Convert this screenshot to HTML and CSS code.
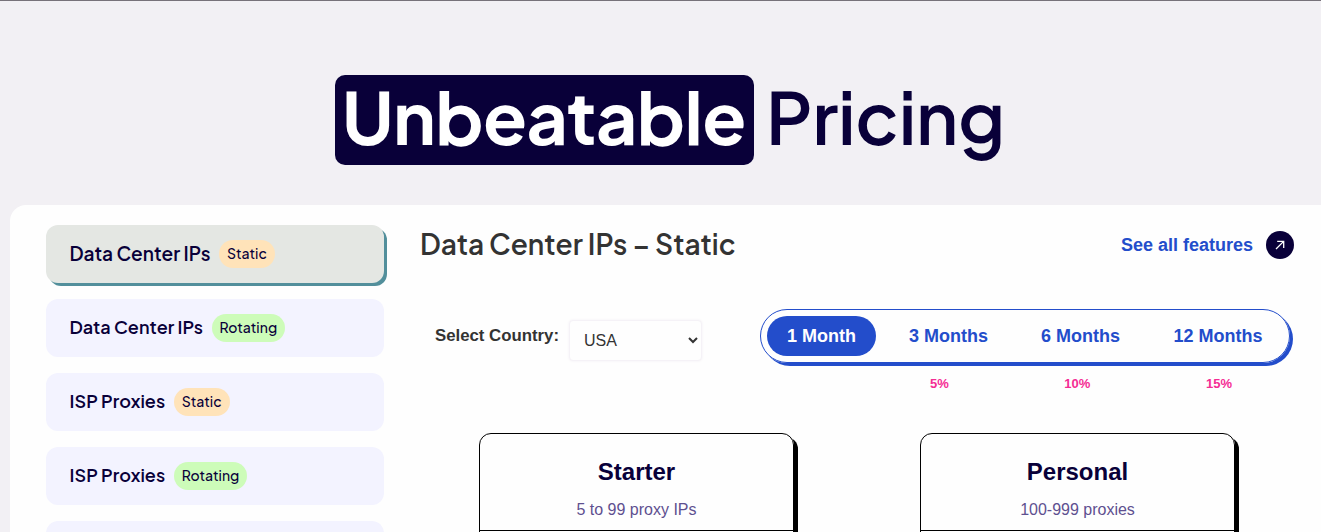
FILE: index.html
```
<!DOCTYPE html>
<html lang="en">
<head>
  <meta charset="UTF-8">
  <meta name="viewport" content="width=device-width, initial-scale=1.0">
  <title>Pricing</title>
  <link rel="stylesheet" href="styles.css">
</head>
<body>
  <h1 class="title"><span class="highlight">Unbeatable</span><span class="title-rest">Pricing</span></h1>

  <main class="panel">
    <nav class="sidebar">
      <a class="plan active"><span class="plan-name">Data Center IPs</span><span class="badge static">Static</span></a>
      <a class="plan"><span class="plan-name">Data Center IPs</span><span class="badge rotating">Rotating</span></a>
      <a class="plan"><span class="plan-name">ISP Proxies</span><span class="badge static">Static</span></a>
      <a class="plan"><span class="plan-name">ISP Proxies</span><span class="badge rotating">Rotating</span></a>
      <a class="plan"></a>
    </nav>

    <section class="content">
      <div class="content-head">
        <h2>Data Center IPs – Static</h2>
        <a class="features">See all features
          <span class="arrow">
            <svg width="10" height="10" viewBox="0 0 10 10" fill="none" stroke="#fff" stroke-width="1.3">
              <path d="M1 9L8.4 1.6M2.2 1.3H8.7V8"/>
            </svg>
          </span>
        </a>
      </div>

      <div class="options">
        <label for="country">Select Country:</label>
        <select id="country">
          <option>USA</option>
        </select>

        <div class="periods">
          <div class="tabs">
            <button class="tab active">1 Month</button>
            <button class="tab">3 Months</button>
            <button class="tab">6 Months</button>
            <button class="tab">12 Months</button>
          </div>
          <div class="discounts">
            <span>5%</span>
            <span>10%</span>
            <span>15%</span>
          </div>
        </div>
      </div>

      <div class="cards">
        <div class="card">
          <div class="card-head">
            <h3>Starter</h3>
            <p>5 to 99 proxy IPs</p>
          </div>
        </div>
        <div class="card">
          <div class="card-head">
            <h3>Personal</h3>
            <p>100-999 proxies</p>
          </div>
        </div>
      </div>
    </section>
  </main>
</body>
</html>
```
FILE: styles.css
```
* { box-sizing: border-box; }
body {
  margin: 0;
  border-top: 1px solid #77727a;
  background: #f2f0f4;
  color: #333;
  font-family: "Liberation Sans", Arial, sans-serif;
}
h1, h2, h3, p { margin: 0; }
.title {
  display: flex;
  gap: 12px;
  height: 90px;
  margin: 74px 0 40px 335px;
  color: #090039;
  font-family: "Plus Jakarta Sans", Inter, sans-serif;
  font-size: 72px;
  line-height: 82px;
  white-space: nowrap;
}
.highlight {
  width: 419px;
  padding-left: 7px;
  border-radius: 10px;
  background: #090039;
  color: #fff;
  font-weight: 700;
  letter-spacing: -0.6px;
}
.title-rest { font-weight: 600; letter-spacing: -0.3px; }
.panel {
  display: flex;
  gap: 36px;
  height: 327px;
  margin-left: 10px;
  padding: 20px 0 0 36px;
  overflow: hidden;
  border-radius: 16px 0 0 0;
  background: #fefefe;
}
.sidebar {
  display: flex;
  flex-direction: column;
  gap: 16px;
  width: 338px;
  flex-shrink: 0;
}
.plan {
  display: flex;
  align-items: center;
  gap: 8.5px;
  height: 58px;
  flex-shrink: 0;
  padding: 0 0 1px 23.5px;
  border-radius: 12px;
  background: #f3f3ff;
  color: #090039;
  font-family: "Plus Jakarta Sans", Inter, sans-serif;
  font-size: 18px;
  font-weight: 600;
  letter-spacing: 0.05px;
}
.plan.active {
  padding-bottom: 0;
  background: #e4e7e3;
  box-shadow: 3px 3px 0 #528f9b;
  font-size: 19px;
}
.plan-name { margin-top: -2px; }
.badge {
  height: 28px;
  padding: 0 8px;
  border-radius: 14px;
  font-size: 14px;
  font-weight: 500;
  line-height: 27px;
}
.static { background: #ffe3b9; }
.rotating { background: #cdfcb9; }
.content { width: 874px; flex-shrink: 0; }
.content-head {
  display: flex;
  justify-content: space-between;
  align-items: center;
  height: 40px;
}
.content-head h2 {
  margin-top: -3px;
  font-family: "Plus Jakarta Sans", Inter, sans-serif;
  font-size: 28px;
  font-weight: 600;
  letter-spacing: 0.06px;
}
.features {
  display: flex;
  align-items: center;
  gap: 13px;
  color: #234dcb;
  font-size: 18px;
  font-weight: 700;
}
.arrow {
  display: flex;
  align-items: center;
  justify-content: center;
  width: 28px;
  height: 28px;
  border-radius: 50%;
  background: #090039;
}
.options {
  display: flex;
  height: 124px;
  margin-top: 44px;
  padding-left: 15px;
}
.options label {
  width: 134px;
  padding-top: 17px;
  font-size: 16.8px;
  font-weight: 700;
}
.options select {
  width: 133px;
  height: 41px;
  margin-top: 11px;
  padding: 0 0 0 10px;
  border: 1px solid #f5f2f7;
  border-radius: 4px;
  background: #fefefe;
  box-shadow: 0 0 3px #f3f0f5;
  color: #333;
  font-family: inherit;
  font-size: 16px;
}
.periods { width: 530px; margin-left: 58px; }
.tabs {
  display: flex;
  height: 54px;
  padding: 6px;
  border: 1px solid #234dcb;
  border-radius: 27px;
  box-shadow: 3px 3px 0 #234dcb;
}
.tab {
  width: 145px;
  flex-shrink: 0;
  padding: 0;
  border: 0;
  border-radius: 20px;
  background: none;
  color: #234dcb;
  font-family: inherit;
  font-size: 18px;
  font-weight: 700;
}
.tab:nth-child(3) { width: 119px; }
.tab:nth-child(4) { width: 132px; margin-left: 12px; }
.tab.active { width: 109px; background: #234dcb; color: #fff; }
.discounts {
  display: flex;
  justify-content: space-between;
  margin-top: 13px;
  padding: 0 58px 0 170px;
  color: #f52c94;
  font-size: 13px;
  font-weight: 700;
}
.cards {
  display: flex;
  gap: 126px;
  padding-left: 59px;
}
.card {
  width: 315px;
  height: 200px;
  border: 1px solid #000;
  border-radius: 12px;
  box-shadow: 4px 4px 0 #000;
  text-align: center;
}
.card-head {
  height: 97px;
  padding-top: 24px;
  border-bottom: 1px solid #000;
}
.card h3 {
  color: #090039;
  font-size: 24px;
  line-height: 28px;
}
.card p {
  margin-top: 15px;
  color: #5e5090;
  font-size: 16px;
  line-height: 18px;
}
```
